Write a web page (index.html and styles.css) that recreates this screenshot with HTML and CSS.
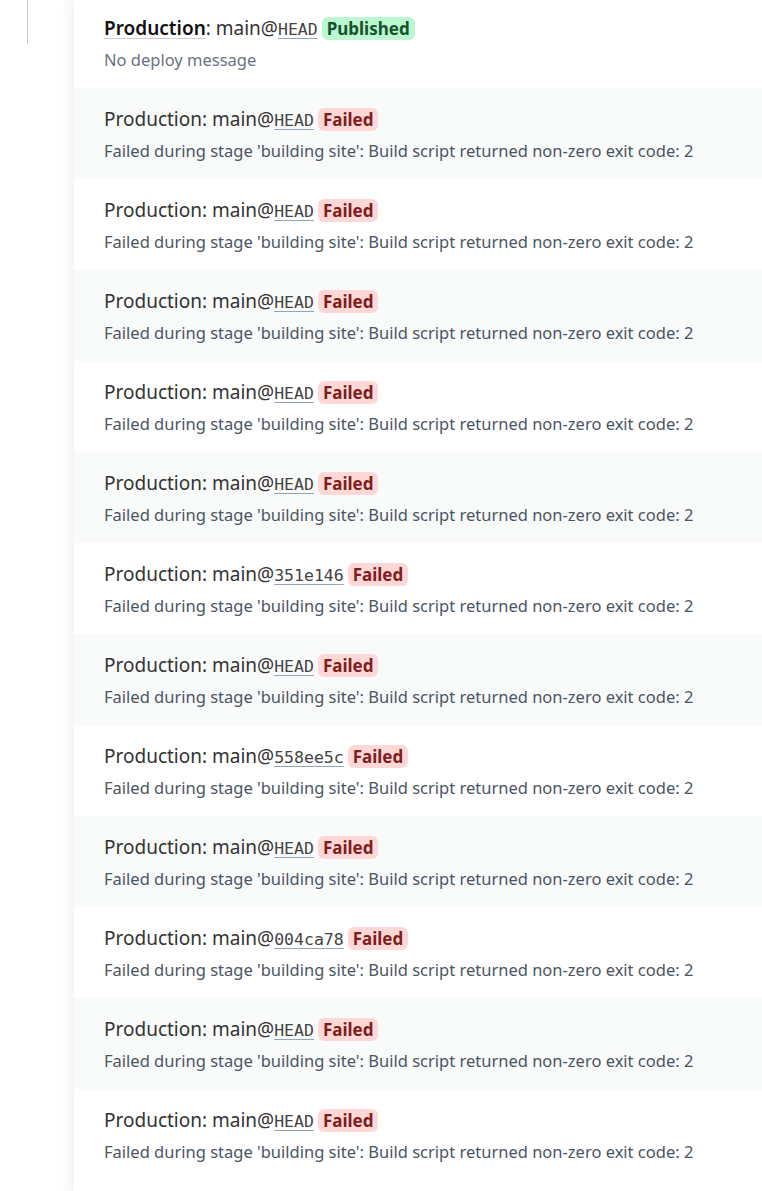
FILE: index.html
```html
<!DOCTYPE html>
<html>
<head>
    <title>Deploys</title>
    <link rel="stylesheet" href="styles.css">
</head>
<body>
    <div class="layout">
        <div class="sidebar"><div class="rule"></div></div>
        <div class="panel">
            <div class="deploy">
                <div class="title"><a class="env" href="#">Production</a>: main@<code>HEAD</code> <span class="badge ok">Published</span></div>
                <div class="msg muted">No deploy message</div>
            </div>
            <div class="deploy">
                <div class="title">Production: main@<code>HEAD</code> <span class="badge fail">Failed</span></div>
                <div class="msg">Failed during stage 'building site': Build script returned non-zero exit code: 2</div>
            </div>
            <div class="deploy">
                <div class="title">Production: main@<code>HEAD</code> <span class="badge fail">Failed</span></div>
                <div class="msg">Failed during stage 'building site': Build script returned non-zero exit code: 2</div>
            </div>
            <div class="deploy">
                <div class="title">Production: main@<code>HEAD</code> <span class="badge fail">Failed</span></div>
                <div class="msg">Failed during stage 'building site': Build script returned non-zero exit code: 2</div>
            </div>
            <div class="deploy">
                <div class="title">Production: main@<code>HEAD</code> <span class="badge fail">Failed</span></div>
                <div class="msg">Failed during stage 'building site': Build script returned non-zero exit code: 2</div>
            </div>
            <div class="deploy">
                <div class="title">Production: main@<code>HEAD</code> <span class="badge fail">Failed</span></div>
                <div class="msg">Failed during stage 'building site': Build script returned non-zero exit code: 2</div>
            </div>
            <div class="deploy">
                <div class="title">Production: main@<code>351e146</code> <span class="badge fail">Failed</span></div>
                <div class="msg">Failed during stage 'building site': Build script returned non-zero exit code: 2</div>
            </div>
            <div class="deploy">
                <div class="title">Production: main@<code>HEAD</code> <span class="badge fail">Failed</span></div>
                <div class="msg">Failed during stage 'building site': Build script returned non-zero exit code: 2</div>
            </div>
            <div class="deploy">
                <div class="title">Production: main@<code>558ee5c</code> <span class="badge fail">Failed</span></div>
                <div class="msg">Failed during stage 'building site': Build script returned non-zero exit code: 2</div>
            </div>
            <div class="deploy">
                <div class="title">Production: main@<code>HEAD</code> <span class="badge fail">Failed</span></div>
                <div class="msg">Failed during stage 'building site': Build script returned non-zero exit code: 2</div>
            </div>
            <div class="deploy">
                <div class="title">Production: main@<code>004ca78</code> <span class="badge fail">Failed</span></div>
                <div class="msg">Failed during stage 'building site': Build script returned non-zero exit code: 2</div>
            </div>
            <div class="deploy">
                <div class="title">Production: main@<code>HEAD</code> <span class="badge fail">Failed</span></div>
                <div class="msg">Failed during stage 'building site': Build script returned non-zero exit code: 2</div>
            </div>
            <div class="deploy">
                <div class="title">Production: main@<code>HEAD</code> <span class="badge fail">Failed</span></div>
                <div class="msg">Failed during stage 'building site': Build script returned non-zero exit code: 2</div>
            </div>
        </div>
    </div>
</body>
</html>
```

FILE: styles.css
```css
body {
    margin: 0;
    background-color: white;
    font-family: "Noto Sans", Arial, sans-serif;
    color: #333;
    overflow: hidden;
}
.layout {
    display: flex;
    margin-top: -3px;
}
.sidebar {
    width: 74px;
    flex-shrink: 0;
}
.rule {
    margin-left: 27px;
    width: 1px;
    height: 47px;
    background-color: #ccc;
}
.panel {
    flex: 1;
    min-height: 1200px;
    background-color: white;
    box-shadow: -4px 0 12px rgba(0,0,0,0.06);
}
.deploy {
    height: 91px;
    box-sizing: border-box;
    padding: 19px 30px 0 30px;
}
.deploy:nth-child(even) {
    background-color: #f9fafa;
}
.title {
    font-size: 19px;
    line-height: 24px;
    color: #333;
    white-space: nowrap;
}
.env {
    color: #111;
    font-weight: 600;
    text-decoration-color: #ccc;
    text-underline-offset: 3px;
}
code {
    font-family: "DejaVu Sans Mono", monospace;
    font-size: 16.5px;
    color: #444;
    text-decoration: underline;
    text-decoration-color: #94a3b8;
    text-underline-offset: 3px;
}
.badge {
    display: inline-block;
    font-size: 17px;
    font-weight: bold;
    line-height: 23px;
    padding: 0 5px;
    margin-left: -1px;
    border-radius: 6px;
}
.ok {
    background-color: #bbf7d0;
    color: #14532d;
}
.fail {
    background-color: #fed7d7;
    color: #7f1d1d;
}
.msg {
    margin-top: 6px;
    font-size: 16.5px;
    color: #4b5563;
    white-space: nowrap;
}
.muted {
    color: #6b7280;
}
```
